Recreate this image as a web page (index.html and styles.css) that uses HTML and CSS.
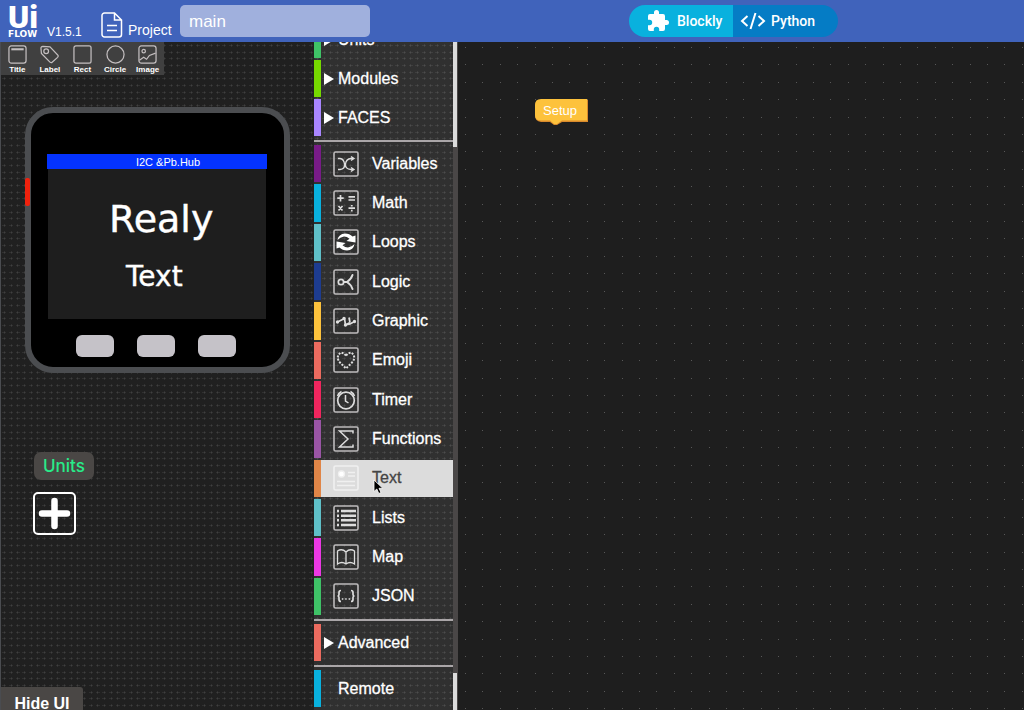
FILE: index.html
```html
<!DOCTYPE html>
<html lang="en">
<head>
<meta charset="utf-8">
<title>UiFlow</title>
<link rel="stylesheet" href="styles.css">
</head>
<body>
<header class="topbar">
  <div class="logo"><span class="logo-ui">Ui</span><span class="logo-flow">FLOW</span></div>
  <span class="version">V1.5.1</span>
  <label class="project" for="project-name">
    <svg width="22" height="26" viewBox="0 0 22 26" fill="none" stroke="#fff" stroke-width="1.5"><path d="M3.500 1H13.500L20.500 8V22.500A2.500 2.500 0 0 1 18 25H3.500A2.500 2.500 0 0 1 1 22.500V3.500A2.500 2.500 0 0 1 3.500 1ZM13.500 1V8H20.500M6 13.500H16M6 18.500H16"/></svg>
    Project
  </label>
  <input class="project-name" id="project-name" type="text" value="main">
  <div class="modes">
    <button class="mode mode-blockly" type="button">
      <svg width="24" height="24" viewBox="0 0 24 24" fill="#fff"><path d="M20.500 11H19V7a2 2 0 0 0-2-2h-4V3.500a2.500 2.500 0 0 0-5 0V5H4a2 2 0 0 0-2 2v3.800h1.500a2.700 2.700 0 0 1 0 5.400H2V20a2 2 0 0 0 2 2h3.800v-1.500a2.700 2.700 0 0 1 5.400 0V22H17a2 2 0 0 0 2-2v-4h1.500a2.500 2.500 0 0 0 0-5z"/></svg>
      Blockly
    </button>
    <button class="mode mode-python" type="button">
      <svg width="26" height="18" viewBox="0 0 26 18" fill="none" stroke="#fff" stroke-width="2"><path d="M7.500 4L2 9L7.500 14M18.500 4L24 9L18.500 14M15.500 1L10.500 17"/></svg>
      Python
    </button>
  </div>
</header>
<main class="workspace">
  <section class="stage">
    <div class="palette">
      <button class="palette-item" type="button"><svg viewBox="0 0 20 20"><rect x="1" y="1" width="18" height="18" rx="2.500"/><path d="M3.500 4.500H16.500" stroke-width="2.200"/></svg>Title</button>
      <button class="palette-item" type="button"><svg viewBox="0 0 20 20"><path d="M3 1.500L10.500 2L19 11Q19.500 12 18.500 13L12.500 18.500Q11.500 19 10.500 18L1.500 9L1 3.500Q1 1.500 3 1.500Z"/><circle cx="6.500" cy="6.500" r="2.500"/></svg>Label</button>
      <button class="palette-item" type="button"><svg viewBox="0 0 20 20"><rect x="1" y="1" width="18" height="18" rx="2"/></svg>Rect</button>
      <button class="palette-item" type="button"><svg viewBox="0 0 20 20"><circle cx="10" cy="10" r="9"/></svg>Circle</button>
      <button class="palette-item" type="button"><svg viewBox="0 0 20 20"><rect x="1" y="1" width="18" height="18" rx="2.500"/><circle cx="6" cy="6.500" r="1.800"/><path d="M1.500 16L6 13L9 15L12 11L18.500 8.500"/></svg>Image</button>
    </div>
    <div class="device">
      <div class="screen">
        <div class="screen-title">I2C &amp;Pb.Hub</div>
        <div class="screen-large">Realy</div>
        <div class="screen-medium">Text</div>
      </div>
      <div class="keys">
        <button class="key" type="button" aria-label="Button A"></button>
        <button class="key" type="button" aria-label="Button B"></button>
        <button class="key" type="button" aria-label="Button C"></button>
      </div>
    </div>
    <div class="units">
      <h2 class="units-title">Units</h2>
      <button class="add-unit" type="button" aria-label="Add unit"><svg width="33" height="33" viewBox="0 0 33 33" stroke="#fff" stroke-width="6.500" stroke-linecap="round"><path d="M16.500 4V29M4 16.500H29"/></svg></button>
    </div>
    <button class="hide-ui" type="button">Hide UI</button>
  </section>
  <nav class="blocks">
    <div class="block-list">
      <button class="block group c-units" type="button"><span class="arrow"></span>Units</button>
      <button class="block group c-modules" type="button"><span class="arrow"></span>Modules</button>
      <button class="block group c-faces" type="button"><span class="arrow"></span>FACES</button>
      <hr class="divider">
      <div class="categories">
        <button class="block c-variables" type="button"><svg class="icon" viewBox="0 0 26 26"><rect class="frame" x="1" y="1" width="24" height="24" rx="1.500"/><path d="M5 7.500H7Q11 8 11.500 13T7 18.500H5M20 7.500H18Q13 8 12.500 13T18 18.500H20M18 5.500L21 7.500L18 9.500M18 16.500L21 18.500L18 20.500"/></svg>Variables</button>
        <button class="block c-math" type="button"><svg class="icon" viewBox="0 0 26 26"><rect class="frame" x="1" y="1" width="24" height="24" rx="1.500"/><path d="M7.500 5V11.500M4.300 8.200H10.700M15.500 6.800H22M15.500 10H22M5.500 16L9.500 20.500M9.500 16L5.500 20.500M15.500 18.200H22M18.800 15V16.600M18.800 19.800V21.400" stroke-width="1.700"/></svg>Math</button>
        <button class="block c-loops" type="button"><svg class="icon" viewBox="0 0 26 26"><rect class="frame" x="1" y="1" width="24" height="24" rx="1.500"/><path class="solid" stroke="none" d="M4.500 11Q5.500 5 12 4.500Q16.500 4.500 19.500 7.500L22.500 6.500V13.500L13.500 12L16.500 9.800Q14 7.500 11 7.500Q7 8 4.500 11ZM21.500 15Q20.500 21 14 21.500Q9.500 21.500 6.500 18.500L3.500 19.500V12.500L12.500 14L9.500 16.200Q12 18.500 15 18.500Q19 18 21.500 15Z"/></svg>Loops</button>
        <button class="block c-logic" type="button"><svg class="icon" viewBox="0 0 26 26"><rect class="frame" x="1" y="1" width="24" height="24" rx="1.500"/><circle cx="8" cy="13" r="2.700" stroke-width="1.700"/><path d="M10.700 13H14M19.500 6Q18 10.500 14 13Q18 15.500 19.500 20" stroke-width="2" stroke-linecap="round"/></svg>Logic</button>
        <button class="block c-graphic" type="button"><svg class="icon" viewBox="0 0 26 26"><rect class="frame" x="1" y="1" width="24" height="24" rx="1.500"/><path d="M4.500 14L11.500 10.500L12.500 17L17 14.500M17 14.500L16 9.500M12.500 17L17 16L21.500 13.500" stroke-width="1.700"/><g class="solid"><circle cx="4.500" cy="14" r="1"/><circle cx="11" cy="10.500" r="1"/><circle cx="12.500" cy="17" r="1"/><circle cx="21.500" cy="13.500" r="1"/></g></svg>Graphic</button>
        <button class="block c-emoji" type="button"><svg class="icon" viewBox="0 0 26 26"><rect class="frame" x="1" y="1" width="24" height="24" rx="1.500"/><path d="M13 8.500L11 6.500L8 5.500L5.500 7.500L4.500 11L6 14.500L9.500 18L13 21.500L16.500 18L20 14.500L21.500 11L20.500 7.500L18 5.500L15 6.500Z" stroke-width="2" stroke-dasharray="2 1.400"/></svg>Emoji</button>
        <button class="block c-timer" type="button"><svg class="icon" viewBox="0 0 26 26"><rect class="frame" x="1" y="1" width="24" height="24" rx="1.500"/><circle cx="13" cy="13.500" r="8.300" stroke-width="1.700"/><path d="M12.500 8V14L15.500 16M4.500 9Q5.500 6 8.500 4.500M17.500 4.500Q20.500 6 21.500 9" stroke-width="1.500"/></svg>Timer</button>
        <button class="block c-functions" type="button"><svg class="icon" viewBox="0 0 26 26"><rect class="frame" x="1" y="1" width="24" height="24" rx="1.500"/><path d="M20 7.500V5H6.500L15 13L6.500 21H20V18.500" stroke-width="1.500"/></svg>Functions</button>
        <button class="block c-text selected" type="button"><svg class="icon" viewBox="0 0 26 26"><rect class="frame" x="1" y="1" width="24" height="24" rx="1.500"/><circle class="solid" cx="8.500" cy="9" r="3"/><path d="M15 7.500H22M15 11H22M4 16.500H22M4 20.500H22"/></svg>Text</button>
        <button class="block c-lists" type="button"><svg class="icon" viewBox="0 0 26 26"><rect class="frame" x="1" y="1" width="24" height="24" rx="1.500"/><path d="M4 6H6M8 6H23M4 10.700H6M8 10.700H23M4 15.300H6M8 15.300H23M4 20H6M8 20H23" stroke-width="2.600"/></svg>Lists</button>
        <button class="block c-map" type="button"><svg class="icon" viewBox="0 0 26 26"><rect class="frame" x="1" y="1" width="24" height="24" rx="1.500"/><path d="M13 8Q9 4 4.500 7V20Q9 17 13 20Q17 17 21.500 20V7Q17 4 13 8ZM13 8V20"/></svg>Map</button>
        <button class="block c-json" type="button"><svg class="icon" viewBox="0 0 26 26"><rect class="frame" x="1" y="1" width="24" height="24" rx="1.500"/><path d="M8 7.500Q6 7.500 6 9.500V11.500Q6 13 4.500 13Q6 13 6 14.500V16.500Q6 18.500 8 18.500M18 7.500Q20 7.500 20 9.500V11.500Q20 13 21.500 13Q20 13 20 14.500V16.500Q20 18.500 18 18.500M8.800 16H10.300M12.200 16H13.700M15.600 16H17.100" stroke-width="1.700"/></svg>JSON</button>
      </div>
      <hr class="divider">
      <button class="block group c-advanced" type="button"><span class="arrow"></span>Advanced</button>
      <hr class="divider">
      <button class="block group c-remote" type="button"><span class="arrow arrow-none"></span>Remote</button>
    </div>
    <div class="scroll"><div class="scroll-start"></div><div class="scroll-end"></div></div>
  </nav>
  <section class="canvas">
    <div class="setup-block">
      <svg class="setup-shape" width="53" height="26" viewBox="0 0 53 26"><path fill="#d98a2c" d="M6 1H53V23H27L22 26H19L15 23H6Q0 22 0 17V7Q0 1 6 1Z"/><path fill="#fdc23c" d="M6 0H52V21.500H27L22 25H19L15 21.500H6Q0 21.500 0 16V6Q0 0 6 0Z"/></svg>
      <span class="setup-label">Setup</span>
    </div>
  </section>
</main>
<svg class="pointer" width="12" height="16" viewBox="0 0 12 16"><path d="M1 1V12.500L3.800 10L5.800 14.500L8 13.500L6 9.300H9.800Z" fill="#000" stroke="#fff" stroke-width=".8"/></svg>
</body>
</html>
```
FILE: styles.css
```css
* { box-sizing: border-box; }
body {
  margin: 0;
  height: 100vh;
  display: flex;
  flex-direction: column;
  overflow: hidden;
  background: #1e1e1e;
  color: #fff;
  font-family: "Liberation Sans", Arial, sans-serif;
}
button { border: 0; padding: 0; background: none; color: inherit; font: inherit; }

.topbar {
  display: flex;
  align-items: center;
  flex: none;
  height: 42px;
  padding-left: 8px;
  background: #4063bb;
}
.logo { width: 39px; display: flex; flex-direction: column; }
.logo-ui { font: 900 32px/26px Roboto, sans-serif; }
.logo-flow { font: bold 9px/8px "DejaVu Sans", sans-serif; }
.version { width: 54px; padding-top: 22px; font-size: 12px; line-height: 16px; }
.project { display: flex; align-items: flex-end; gap: 5px; width: 79px; padding-top: 7px; font-size: 14px; line-height: 15px; }
.project svg { flex: none; }
.project-name {
  width: 190px;
  height: 32px;
  padding: 1px 9px 0;
  border: 0;
  border-radius: 5px;
  background: #a0b0dd;
  color: #fff;
  font: 17px "Liberation Sans", Arial, sans-serif;
}
.modes { display: flex; height: 32px; margin: 0 186px 0 auto; border-radius: 16px; overflow: hidden; }
.mode { display: flex; align-items: center; font: 500 14px Roboto, sans-serif; }
.mode-blockly { width: 104px; padding-left: 17px; gap: 7px; background: #09b1de; }
.mode-python { width: 105px; padding-left: 7px; gap: 5px; background: #057cc5; }

.workspace { display: flex; flex: 1; min-height: 0; }
.stage, .block-list {
  background-image: url("data:image/svg+xml,%3Csvg xmlns='http://www.w3.org/2000/svg' width='20' height='20'%3E%3Cpath d='M1 3.500h4M3.500 2v3M8 3.500h4M10.500 2v3M15 3.500h4M16.500 2v3M1 10.500h4M3.500 9v3M8 10.500h4M10.500 9v3M15 10.500h4M16.500 9v3M1 16.500h4M3.500 15v3M8 16.500h4M10.500 15v3M15 16.500h4M16.500 15v3' stroke='%23fff' stroke-opacity='.07'/%3E%3C/svg%3E");
}
.stage {
  display: flex;
  flex-direction: column;
  align-items: flex-start;
  width: 314px;
  border-left: 1px solid #4a4c50;
  background-color: #202020;
}
.palette { display: flex; width: 163px; height: 33px; background: #404040; }
.palette-item {
  display: flex;
  flex: 1;
  flex-direction: column;
  align-items: center;
  gap: 1px;
  padding-top: 3px;
  font-size: 8px;
  font-weight: bold;
  line-height: 9px;
}
.palette-item svg { width: 19px; height: 19px; fill: none; stroke: #c4bfc0; stroke-width: 1.3; }

.device {
  position: relative;
  width: 265px;
  margin: 32px 0 0 24px;
  padding: 41px 17px 10px;
  border: 6px solid #4b4d50;
  border-radius: 28px;
  background: #000;
}
.device::before {
  content: "";
  position: absolute;
  left: -6px;
  top: 65px;
  width: 5px;
  height: 28px;
  border-radius: 2px;
  background: #f0210d;
}
.screen { height: 165px; margin: 0 0 0 -1px; background: linear-gradient(#1e1e1e, #1e1e1e) center / calc(100% - 2px) 100% no-repeat; }
.screen-title { padding: 2px 0 0 22px; background: #0433ff; font-size: 11px; line-height: 13px; text-align: center; }
.screen-large { padding: 28px 0 0 62px; font: 38px/44px "DejaVu Sans", sans-serif; -webkit-text-stroke: 0.4px #fff; }
.screen-medium { padding: 19px 0 0 79px; font: 28px/34px "DejaVu Sans", sans-serif; -webkit-text-stroke: 0.4px #fff; }
.keys { display: flex; justify-content: center; gap: 23px; padding: 16px 4px 0 0; }
.key { width: 38px; height: 22px; border-radius: 6px; background: #c5c2c8; }

.units { margin: 79px 0 0 32px; }
.units-title {
  margin: 0 0 12px 1px;
  padding: 0 9px;
  border-radius: 7px;
  background: #4a4745;
  color: #28ec89;
  font: 500 17px/28px Inter, sans-serif;
}
.add-unit { display: grid; place-items: center; width: 43px; height: 43px; border: 2px solid #fff; border-radius: 5px; }
.hide-ui {
  margin-top: auto;
  width: 82px;
  height: 23px;
  padding-top: 7px;
  border-radius: 0 3px 0 0;
  background: #4a4745;
  font-size: 16px;
  font-weight: bold;
  line-height: 20px;
}

.blocks { display: flex; width: 144px; }
.block-list {
  display: flex;
  flex: 1;
  flex-direction: column;
  justify-content: flex-end;
  padding-bottom: 2px;
  overflow: hidden;
  background-color: #303030;
}
.categories { display: grid; grid-auto-rows: 1fr; flex: none; min-height: 472px; }
.block {
  display: flex;
  flex: none;
  align-items: center;
  gap: 13px;
  margin: 1px 0;
  min-height: 37px;
  padding-left: 12px;
  border-left: 7px solid var(--tag);
  font-size: 16px;
  -webkit-text-stroke: 0.3px currentColor;
}
.group { gap: 4px; padding-left: 3px; }
.arrow { border: 6px solid transparent; border-left: 10px solid #fff; border-right: 0; }
.arrow-none { visibility: hidden; }
.icon { flex: none; width: 26px; height: 26px; fill: none; stroke: #ddd; stroke-width: 1.3; }
.icon .frame { stroke: #bdbbbc; stroke-width: 1.6; }
.icon .solid { fill: #fff; }
.selected { background: #dcdcdc; color: #444; }
.selected .icon, .selected .frame { stroke: #f0f0f0; }
.divider { flex: none; width: 100%; height: 2px; margin: 3px 0 2px; border: 0; background: #aaa6a8; }
.c-units { --tag: #3fc267; }
.c-modules { --tag: #76d900; }
.c-faces { --tag: #a986ff; }
.c-variables { --tag: #781b87; }
.c-math { --tag: #09b1de; }
.c-loops { --tag: #5fc0c8; }
.c-logic { --tag: #1d3c90; }
.c-graphic { --tag: #fdc23c; }
.c-emoji { --tag: #ec6b5f; }
.c-timer { --tag: #f0265e; }
.c-functions { --tag: #9a55a5; }
.c-text { --tag: #e08547; }
.c-lists { --tag: #5fc0c8; }
.c-map { --tag: #ec38e4; }
.c-json { --tag: #3fc267; }
.c-advanced { --tag: #ec6b5f; }
.c-remote { --tag: #09b1de; }
.scroll { display: flex; flex-direction: column; justify-content: space-between; width: 5px; padding-right: 1px; background: #4a4747; }
.scroll-start { height: 105px; background: #dcdcdc; }
.scroll-end { height: 37px; background: #dcdcdc; }

.canvas {
  position: relative;
  flex: 1;
  background: #1e1e1e url("data:image/svg+xml,%3Csvg xmlns='http://www.w3.org/2000/svg' width='87' height='87'%3E%3Cdefs%3E%3Cpath id='r' d='M0 .5h1M17 .5h1M35 .5h1M52 .5h1M70 .5h1' stroke='%23585858'/%3E%3C/defs%3E%3Cuse href='%23r'/%3E%3Cuse href='%23r' y='17'/%3E%3Cuse href='%23r' y='35'/%3E%3Cuse href='%23r' y='52'/%3E%3Cuse href='%23r' y='70'/%3E%3C/svg%3E") 7px 5px;
}
.setup-block { position: absolute; left: 77px; top: 57px; width: 53px; height: 26px; }
.setup-shape { position: absolute; left: 0; top: 0; }
.setup-label { position: relative; display: block; padding-left: 8px; font-size: 13px; line-height: 24px; }
.pointer { position: absolute; left: 373px; top: 479px; }
```
